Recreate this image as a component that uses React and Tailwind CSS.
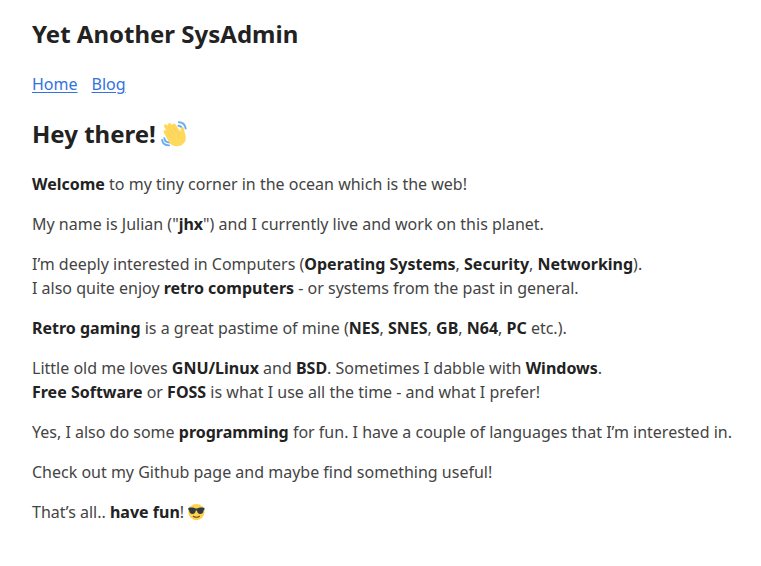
import React from "react";

function Wave() {
  return (
    <svg role="img" aria-label="Waving hand" viewBox="0 0 128 128" className="-ml-px inline-block size-7 align-[-5px]">
      <g fill="none" stroke="#6aaef2" strokeWidth="9" strokeLinecap="round" strokeLinejoin="round">
        <path d="M82 10c17 0 28 12 31 29M80 26c10 1 16 8 18 16" />
        <path d="M5 91c2 15 14 25 32 25M15 83c2 12 11 20 24 20" />
      </g>
      <path fill="#ffd95e" d="M13 58c-5-9 4-16 11-10l3 3-12-18c-6-11 7-18 14-9l3 3c-4-12 9-18 15-9l4 6c1-10 11-11 16-3l22 33c0-8 0-13 2-17 3-7 14-6 15 4 1 13 4 20 6 31 4 21-4 37-21 44-20 8-44 3-54-13z" />
      <path fill="none" stroke="#f5c451" strokeWidth="2" strokeLinecap="round" d="M27 51l18 25M32 27l26 38M51 24l24 35M89 54c-9 8-12 18-8 29" />
    </svg>
  );
}

function Cool() {
  return (
    <svg role="img" aria-label="Smiling face with sunglasses" viewBox="0 0 128 128" className="-ml-px inline-block size-5 align-[-4px]">
      <circle cx="60" cy="64" r="52" fill="#ffd24d" />
      <path fill="#303c42" d="M8 38c18-5 36-3 46 3h12c10-6 28-8 46-3v10l-5 4c-3 18-11 24-22 24-13 0-19-9-21-22h-8c-2 13-8 22-21 22-11 0-19-6-22-24l-5-4z" />
      <path d="M40 91q20 14 40 0" fill="none" stroke="#6d4c1d" strokeWidth="7" strokeLinecap="round" />
    </svg>
  );
}

const B = ({ children }) => <strong className="font-bold text-[#222222]">{children}</strong>;

export default function App() {
  return (
    <main className="py-4 pr-6 pl-8 font-['Noto_Sans',sans-serif] text-base leading-6 text-[#444444]">
      <header className="mb-5 flex flex-col gap-5">
        <h1 className="text-2xl leading-9 font-bold text-[#222222]">Yet Another SysAdmin</h1>
        <nav className="flex gap-3.5">
          <a href="#home" className="text-[#3273dc] underline underline-offset-2">Home</a>
          <a href="#blog" className="text-[#3273dc] underline underline-offset-2">Blog</a>
        </nav>
      </header>
      <h2 className="mb-5 text-2xl leading-9 font-bold text-[#222222]">Hey there! <Wave /></h2>
      <article className="flex flex-col gap-4">
        <p><B>Welcome</B> to my tiny corner in the ocean which is the web!</p>
        <p>My name is Julian ("<B>jhx</B>") and I currently live and work on this planet.</p>
        <p>
          I’m deeply interested in Computers (<B>Operating Systems</B>, <B>Security</B>, <B>Networking</B>).<br />
          I also quite enjoy <B>retro computers</B> - or systems from the past in general.
        </p>
        <p><B>Retro gaming</B> is a great pastime of mine (<B>NES</B>, <B>SNES</B>, <B>GB</B>, <B>N64</B>, <B>PC</B> etc.).</p>
        <p>
          Little old me loves <B>GNU/Linux</B> and <B>BSD</B>. Sometimes I dabble with <B>Windows</B>.<br />
          <B>Free Software</B> or <B>FOSS</B> is what I use all the time - and what I prefer!
        </p>
        <p>Yes, I also do some <B>programming</B> for fun. I have a couple of languages that I’m interested in.</p>
        <p>Check out my Github page and maybe find something useful!</p>
        <p>That’s all.. <B>have fun</B>! <Cool /></p>
      </article>
    </main>
  );
}
